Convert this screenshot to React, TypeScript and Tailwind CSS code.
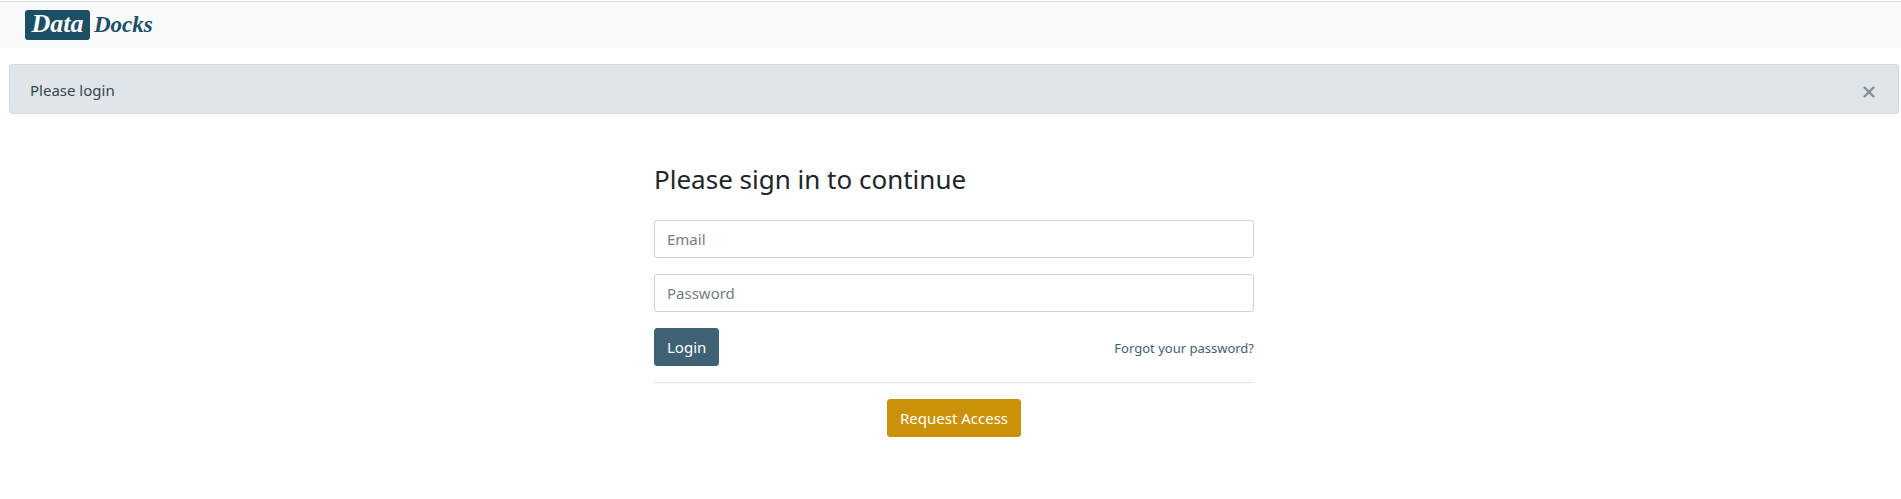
import React from "react";

function Logo() {
  return (
    <a
      href="#"
      aria-label="Data Docks"
      className="flex items-center gap-1 font-['Liberation_Serif',serif] font-bold italic leading-none text-[#1b4f63]"
    >
      <span className="flex h-[30px] w-[65px] items-center justify-center rounded-[3px] bg-[#1b4f63] pb-0.5 text-[26px] text-white">
        Data
      </span>
      <span className="pb-0.5 text-[23px]">Docks</span>
    </a>
  );
}

function Alert() {
  const [open, setOpen] = React.useState(true);
  if (!open) return null;
  return (
    <div
      role="alert"
      className="flex items-center justify-between rounded-[3px] border border-[#d1d9dd] bg-[#dfe5e8] pt-[13px] pr-[23px] pb-[11px] pl-5 text-[#354852]"
    >
      <span>Please login</span>
      <button type="button" aria-label="Close" onClick={() => setOpen(false)} className="pt-1">
        <svg viewBox="0 0 12 12" className="size-3" stroke="#869094" strokeWidth="2.4" fill="none">
          <path d="M1 1 11 11M11 1 1 11" />
        </svg>
      </button>
    </div>
  );
}

const field =
  "h-[38px] w-full rounded-[3px] border border-[#ced4da] bg-white px-3 text-[#495057] placeholder:text-[#757c83] focus:outline-2 focus:outline-[#3f6174]";

export default function App() {
  return (
    <div className="bg-white font-['Noto_Sans','Open_Sans',sans-serif] text-[15px] leading-6 text-[#212529]">
      <header className="mt-px flex h-[47px] items-center border-t border-[#dcdfe2] bg-[#f8f9fa] px-[25px]">
        <Logo />
      </header>
      <main className="mt-4 pr-[2px] pl-[9px]">
        <Alert />
        <form
          className="mx-auto mt-12 flex max-w-[600px] flex-col gap-4"
          onSubmit={(e) => e.preventDefault()}
        >
          <h1 className="mb-2 text-[26px] leading-[34px]">Please sign in to continue</h1>
          <input type="email" aria-label="Email" placeholder="Email" className={field} />
          <input type="password" aria-label="Password" placeholder="Password" className={field} />
          <div className="flex items-center justify-between">
            <button
              type="submit"
              className="h-[38px] rounded-[3px] border border-[#3f6174] bg-[#3f6174] px-3 text-white"
            >
              Login
            </button>
            <a href="#" className="pt-0.5 text-[13px] text-[#3f6174] hover:underline">
              Forgot your password?
            </a>
          </div>
          <hr className="border-[#e3e4e5]" />
          <button
            type="button"
            className="h-[38px] self-center rounded-[3px] border border-[#cb9209] bg-[#cb9209] px-3 text-white"
          >
            Request Access
          </button>
        </form>
      </main>
    </div>
  );
}
